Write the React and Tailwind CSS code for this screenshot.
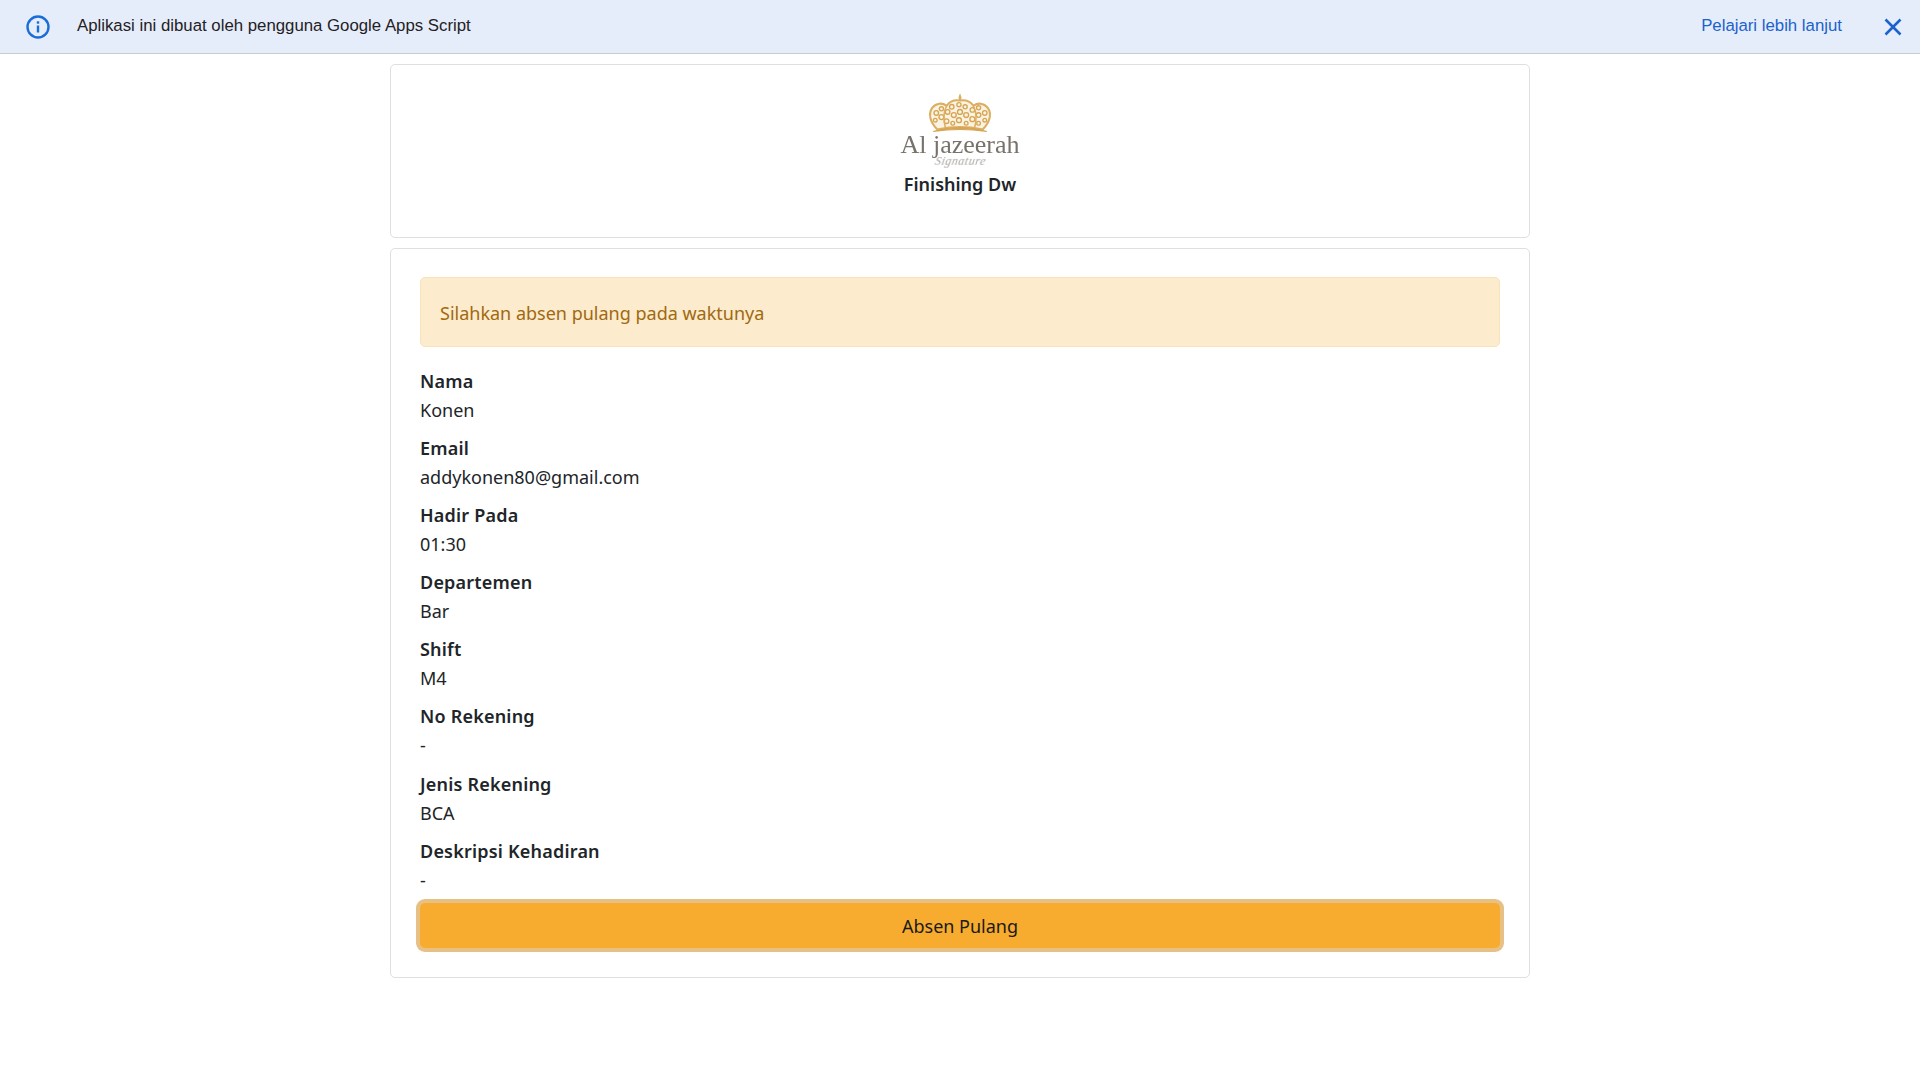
import React from 'react';

const FONT = "font-['Noto_Sans','Open_Sans',sans-serif]";

const fields = [
  ['Nama', 'Konen'],
  ['Email', 'addykonen80@gmail.com'],
  ['Hadir Pada', '01:30'],
  ['Departemen', 'Bar'],
  ['Shift', 'M4'],
  ['No Rekening', '-'],
  ['Jenis Rekening', 'BCA'],
  ['Deskripsi Kehadiran', '-'],
];

// lace dots inside the crown: [cx, cy, r]
const lace = [
  [9, 20, 2.2], [14, 16, 2], [8, 27, 1.8], [14, 24, 2.4], [20, 19, 2.2], [19, 28, 2.2], [24, 14, 2.2],
  [26, 22, 2.4], [25, 30, 1.8], [31, 12, 2], [32, 19, 2.4], [31, 27, 2.4], [37, 14, 2], [38, 22, 2.4],
  [38, 30, 1.8], [44, 17, 2.2], [44, 26, 2.4], [50, 15, 2], [50, 22, 2.2], [50, 30, 1.8], [56, 20, 2.2], [56, 27, 1.8],
];

const Logo = () => (
  <div className="flex flex-col items-center">
    <svg width="66" height="44" viewBox="0 0 64 42" fill="none" className="block blur-[0.4px]">
      <path d="M32 1c1.500 3 2.200 5 0 8-2.200-3-1.500-5 0-8z" fill="#dcae62" />
      <path
        d="M10 36C3 29 1 21 5 15c4-5 10-5 14-2 3-4 8-6 13-5 5-1 10 1 13 5 4-3 10-3 14 2 4 6 2 14-5 21-14-3-30-3-44 0z"
        fill="#fbf3e2"
        stroke="#dcae62"
        strokeWidth="2"
      />
      {lace.map(([cx, cy, r]) => (
        <circle key={`${cx}-${cy}`} cx={cx} cy={cy} r={r} stroke="#d6a553" strokeWidth="1.300" />
      ))}
      <path d="M19 13c-3 6-3 15-1 22M45 13c3 6 3 15 1 22" stroke="#dcae62" strokeWidth="1.500" />
      <path d="M6 38c16-5 36-5 52 0-16-2.500-36-2.500-52 0z" fill="#d6a553" stroke="#d6a553" strokeWidth="1" />
    </svg>
    <div className="-mt-[2px] h-[22px] whitespace-nowrap font-['Liberation_Serif',serif] text-[26px] leading-[22px] text-[#77726a] blur-[0.3px]">
      Al jazeerah
    </div>
    <div className="h-[12px] -skew-x-12 font-['Liberation_Serif',serif] text-[12px] italic leading-[10px] tracking-[0.5px] text-[#aaa7a1] blur-[0.3px]">
      Signature
    </div>
  </div>
);

const InfoIcon = () => (
  <svg width="24" height="24" viewBox="0 0 24 24" fill="none" className="shrink-0">
    <circle cx="12" cy="12" r="10.500" stroke="#1a6dd9" strokeWidth="2.400" />
    <rect x="10.800" y="10.500" width="2.400" height="7" fill="#1a6dd9" />
    <rect x="10.800" y="6.300" width="2.400" height="2.400" fill="#1a6dd9" />
  </svg>
);

const CloseIcon = () => (
  <svg width="18" height="18" viewBox="0 0 18 18" fill="none">
    <path d="M1.500 1.500l15 15M16.500 1.500l-15 15" stroke="#1a62cc" strokeWidth="2.600" />
  </svg>
);

export default function App() {
  return (
    <div className={`min-h-[1080px] bg-white ${FONT}`}>
      {/* Apps Script banner */}
      <div className="flex h-[54px] items-center justify-between border-b border-[#c9ccd3] bg-[#e6edfa] pl-[26px] pr-[18px] font-['Liberation_Sans',sans-serif]">
        <div className="flex items-center">
          <InfoIcon />
          <span className="ml-[27px] -mt-[2px] text-[16.800px] text-[#1f2125]">
            Aplikasi ini dibuat oleh pengguna Google Apps Script
          </span>
        </div>
        <div className="flex items-center">
          <span className="-mt-[2px] text-[16.800px] text-[#1a62cc]">Pelajari lebih lanjut</span>
          <span className="ml-[42px]">
            <CloseIcon />
          </span>
        </div>
      </div>

      <div className="mx-auto mt-[10px] flex w-[1140px] flex-col gap-[10px]">
        <div className="flex h-[174px] flex-col items-center rounded-[5px] border border-[#dfdfdf] pt-[27px]">
          <Logo />
          <div className="mt-[2px] text-[18px] leading-[29px] font-semibold text-[#212529]">Finishing Dw</div>
        </div>

        <div className="rounded-[5px] border border-[#dfdfdf] px-[29px] pt-[28px] pb-[29px]">
          <div className="flex h-[70px] items-center rounded-[5px] border border-[#fbe3b8] bg-[#fdebcd] px-[19px] pt-[2px] text-[18px] text-[#a0690f]">
            Silahkan absen pulang pada waktunya
          </div>
          <div className="mt-[20px] flex flex-col gap-[9.100px]">
            {fields.map(([label, value]) => (
              <div key={label} className="text-[18px] leading-[29px] text-[#212529]">
                <div className="font-semibold tracking-[0.2px]">{label}</div>
                <div>{value}</div>
              </div>
            ))}
          </div>
          <button className="mt-[8px] h-[45px] w-full rounded-[5px] bg-[#f7ac2f] pt-[2px] text-[18px] text-[#1a1a1a] ring-4 ring-[#e7c086]">
            Absen Pulang
          </button>
        </div>
      </div>
    </div>
  );
}
